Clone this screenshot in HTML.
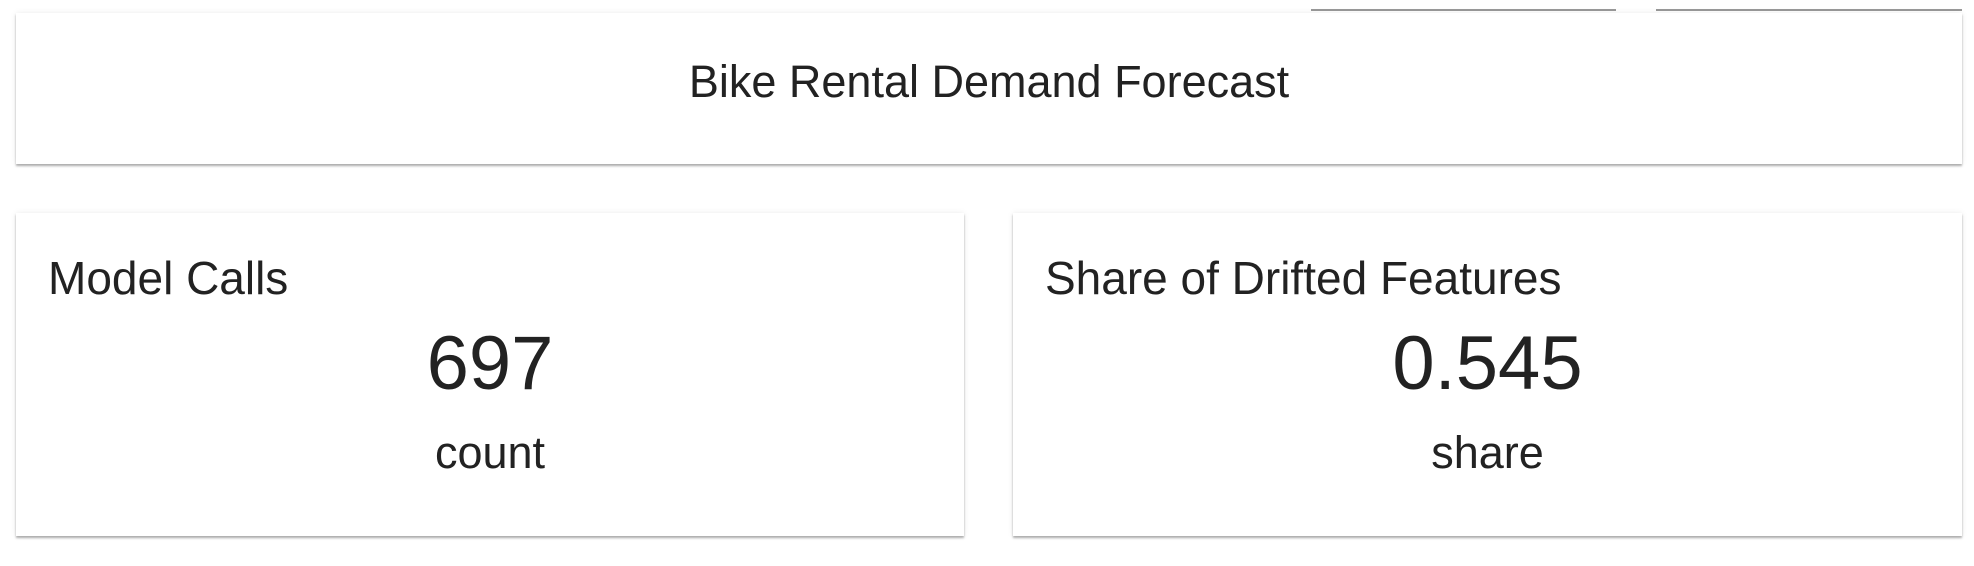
<!DOCTYPE html>
<html><head><style>
body{margin:0;width:1974px;height:566px;background:#fff;font-family:"Liberation Sans",sans-serif;color:#222;position:relative;overflow:hidden}
.card{position:absolute;background:#fff;box-shadow:0 2px 2px rgba(0,0,0,.3),0 0 6px rgba(0,0,0,.08)}
.line{position:absolute;top:9px;height:2px;background:#999}
.t{position:absolute;white-space:nowrap}
.c{position:absolute;left:0;right:0;text-align:center;white-space:nowrap}
</style></head><body>
<div class="line" style="left:1311px;width:305px"></div>
<div class="line" style="left:1656px;width:306px"></div>
<div class="card" style="left:16px;top:13px;width:1946px;height:151px">
<div class="c" style="top:43px;font-size:45px">Bike Rental Demand Forecast</div>
</div>
<div class="card" style="left:16px;top:213px;width:948px;height:323px">
<div class="t" style="left:32px;top:38px;font-size:46px">Model Calls</div>
<div class="c" style="top:107px;font-size:76px">697</div>
<div class="c" style="top:214px;font-size:45px">count</div>
</div>
<div class="card" style="left:1013px;top:213px;width:949px;height:323px">
<div class="t" style="left:32px;top:38px;font-size:46px">Share of Drifted Features</div>
<div class="c" style="top:107px;font-size:76px">0.545</div>
<div class="c" style="top:214px;font-size:45px">share</div>
</div>
</body></html>
